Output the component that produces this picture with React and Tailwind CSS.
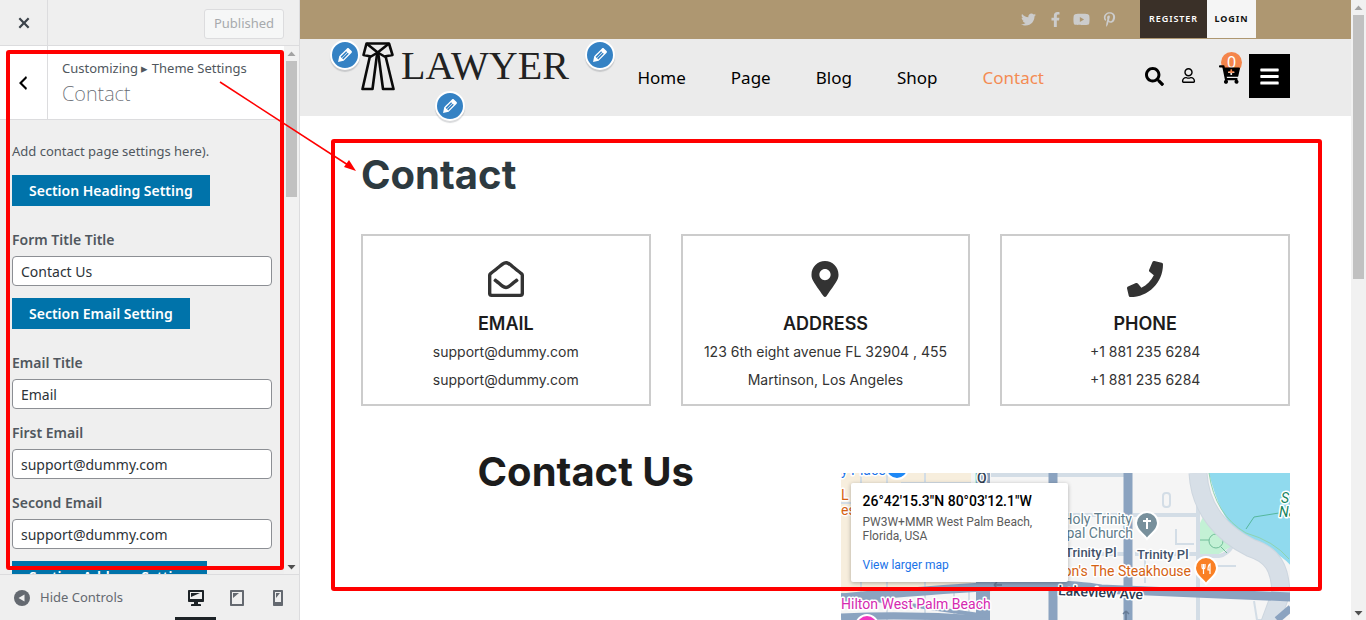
import React from "react";
import {
  FaTwitter,
  FaFacebookF,
  FaYoutube,
  FaPinterestP,
  FaSearch,
  FaRegUser,
  FaCartPlus,
  FaBars,
  FaMapMarkerAlt,
  FaPhone,
  FaRegEnvelopeOpen,
} from "react-icons/fa";

const icons = {
  pencil:
    "M13.89 3.39l2.71 2.72c.46.46.42 1.24.03 1.64l-8.01 8.02-5.56 1.16 1.16-5.58s7.6-7.63 7.99-8.03c.39-.39 1.22-.39 1.68.07zm-2.73 2.79l-5.59 5.61 1.11 1.11 5.54-5.65zm-2.97 8.23l5.58-5.6-1.07-1.08-5.59 5.6z",
  close:
    "M14.95 6.46L11.41 10l3.54 3.54-1.41 1.41L10 11.42l-3.53 3.53-1.42-1.42L8.58 10 5.05 6.47l1.42-1.42L10 8.58l3.54-3.53z",
  back: "M14 5l-5 5 5 5-1 2-7-7 7-7z",
  desktop:
    "M3 2h14c.55 0 1 .45 1 1v10c0 .55-.45 1-1 1h-5v2h2c.55 0 1 .45 1 1v1H5v-1c0-.55.45-1 1-1h2v-2H3c-.55 0-1-.45-1-1V3c0-.55.45-1 1-1zm13 9V4H4v7h12zM5 5h9L5 9V5z",
  tablet:
    "M4 2h12c.55 0 1 .45 1 1v14c0 .55-.45 1-1 1H4c-.55 0-1-.45-1-1V3c0-.55.45-1 1-1zm11 14V4H5v12h10zM6 5h6l-6 5V5z",
  phone:
    "M6 2h8c.55 0 1 .45 1 1v14c0 .55-.45 1-1 1H6c-.55 0-1-.45-1-1V3c0-.55.45-1 1-1zm7 12V4H7v10h6zM8 5h4l-4 5V5z",
};

function Glyph({ name, className = "size-5" }) {
  return (
    <svg viewBox="0 0 20 20" className={className} fill="currentColor" aria-hidden="true">
      <path fillRule="evenodd" d={icons[name]} />
    </svg>
  );
}

function Scrollbar({ thumb }) {
  return (
    <div className="flex w-[15px] shrink-0 flex-col items-center justify-between bg-[#f1f1f1]" aria-hidden="true">
      <div className="flex flex-col items-center">
        <svg className="h-[15px] w-[9px]" viewBox="0 0 9 15">
          <path d="M0.5 10L4.500 5.500L8.500 10Z" fill="#a3a3a3" />
        </svg>
        <div className={`w-[11px] bg-[#c1c1c1] ${thumb}`} />
      </div>
      <svg className="h-[15px] w-[9px]" viewBox="0 0 9 15">
        <path d="M0.5 6L4.500 10.500L8.500 6Z" fill="#505050" />
      </svg>
    </div>
  );
}

function SectionButton({ children }) {
  return (
    <button className="mt-3 block h-[31px] self-start bg-[#0073aa] px-[17px] text-[14px] leading-5 font-semibold text-white">
      {children}
    </button>
  );
}

function Field({ id, label, value, gap }) {
  return (
    <div className={gap}>
      <label htmlFor={id} className="block text-[14px] leading-5 font-semibold text-[#50575e]">
        {label}
      </label>
      <input
        id={id}
        defaultValue={value}
        className="mt-1.5 h-[30px] w-full rounded-[4px] border border-[#8c8f94] bg-white px-2 text-[14px] text-[#2c3338]"
      />
    </div>
  );
}

function Sidebar() {
  return (
    <aside className="relative flex w-[300px] shrink-0 flex-col border-r border-[#dcdcde] bg-[#efefef] font-['Noto_Sans',sans-serif]">
      <header className="flex h-[46px] shrink-0 items-center justify-between border-b border-[#dcdcde] pr-[15px]">
        <button aria-label="Close" className="flex h-full w-12 items-center justify-center border-r border-[#dcdcde] text-[#3c434a]">
          <Glyph name="close" className="size-[22px]" />
        </button>
        <button className="mt-0.5 h-[30px] w-20 rounded-[3px] border border-[#dcdcde] bg-[#f6f7f7] text-[13px] text-[#a7aaad]">
          Published
        </button>
      </header>

      <div className="flex min-h-0 flex-1">
        <div className="min-w-0 flex-1 overflow-hidden">
          <div className="flex h-[74px] border-b border-[#dcdcde] bg-white">
            <button aria-label="Back" className="flex w-12 shrink-0 items-center justify-center border-r border-[#dcdcde] pr-0.5 text-black">
              <Glyph name="back" />
            </button>
            <div className="pt-3 pl-3.5">
              <p className="text-[13px] leading-5 whitespace-nowrap text-[#50575e]">Customizing ▸ Theme Settings</p>
              <h2 className="mt-1 text-[20px] leading-6 font-extralight text-[#646970]">Contact</h2>
            </div>
          </div>
          <div className="flex flex-col px-3 pt-[21px]">
            <p className="mb-0.5 text-[13px] leading-5 text-[#50575e]">Add contact page settings here).</p>
            <SectionButton>Section Heading Setting</SectionButton>
            <Field id="form-title" label="Form Title Title" value="Contact Us" gap="mt-6" />
            <SectionButton>Section Email Setting</SectionButton>
            <Field id="email-title" label="Email Title" value="Email" gap="mt-6" />
            <Field id="first-email" label="First Email" value="support@dummy.com" gap="mt-3.5" />
            <Field id="second-email" label="Second Email" value="support@dummy.com" gap="mt-3.5" />
            <SectionButton>Section Address Setting</SectionButton>
          </div>
        </div>
        <Scrollbar thumb="h-[136px]" />
      </div>

      <footer className="flex h-[46px] shrink-0 items-center justify-between border-t border-[#dcdcde] pr-px text-[#646970]">
        <button className="flex items-center gap-2.5 pl-3.5 text-[13px]">
          <svg viewBox="0 0 16 16" className="size-4" aria-hidden="true">
            <circle cx="8" cy="8" r="8" fill="#646970" />
            <path d="M10.500 4.500v7L4.500 8z" fill="#efefef" />
          </svg>
          Hide Controls
        </button>
        <div className="flex h-full">
          <button aria-label="Desktop preview" className="flex w-[41px] items-center justify-center border-b-[3px] border-[#1d2327] pt-1 text-[#1d2327]">
            <Glyph name="desktop" />
          </button>
          <button aria-label="Tablet preview" className="flex w-[41px] items-center justify-center border-b-[3px] border-transparent pt-1">
            <Glyph name="tablet" />
          </button>
          <button aria-label="Mobile preview" className="flex w-[41px] items-center justify-center border-b-[3px] border-transparent pt-1">
            <Glyph name="phone" />
          </button>
        </div>
      </footer>

      <div className="pointer-events-none absolute top-[50px] right-[15px] bottom-[50px] left-1.5 rounded-[3px] border-4 border-[#f00]" />
    </aside>
  );
}

function EditPin({ place }) {
  return (
    <button
      aria-label="Edit"
      className={`absolute flex size-[30px] items-center justify-center rounded-full border-2 border-white bg-[#3582c4] text-white shadow-[0_2px_1px_rgba(60,67,74,0.2)] ${place}`}
    >
      <Glyph name="pencil" className="size-5 shrink-0" />
    </button>
  );
}

function Logo() {
  return (
    <a href="#home" className="flex items-center gap-1.5 text-[#222]">
      <svg viewBox="0 0 34 50" className="h-[50px] w-[34px]" fill="none" stroke="#0a0a0a" strokeWidth="2.600" strokeLinejoin="round" aria-hidden="true">
        <path d="M5.500 2.500H28L31.500 14L23.500 15.500L16.700 11.500L10 15.500L2.500 14Z" />
        <path d="M5.500 2.500L16.700 11.500L28 2.500" />
        <path d="M9 15L1.500 48H11.500L16.200 12" />
        <path d="M24.500 15L32.500 48H22L17.200 12" />
      </svg>
      <span className="font-['Liberation_Serif',serif] text-[40px] leading-[54px]">LAWYER</span>
    </a>
  );
}

const menu = ["Home", "Page", "Blog", "Shop", "Contact"];

function SiteHeader() {
  return (
    <header className="font-['Noto_Sans',sans-serif]">
      <div className="flex h-[39px] items-start justify-end bg-[#ae9771] pr-[95px]">
        <div className="flex h-[39px] items-center text-[#ccc]">
          <a href="#twitter" aria-label="Twitter" className="mr-3"><FaTwitter size={15} /></a>
          <a href="#facebook" aria-label="Facebook" className="mr-2.5"><FaFacebookF size={15} /></a>
          <a href="#youtube" aria-label="YouTube" className="mr-3"><FaYoutube size={17} /></a>
          <a href="#pinterest" aria-label="Pinterest" className="mr-[23px]"><FaPinterestP size={15} /></a>
        </div>
        <a href="#register" className="flex h-[38px] w-[67px] items-center justify-center bg-[#3a3028] text-[9px] font-semibold tracking-widest text-white">
          REGISTER
        </a>
        <a href="#login" className="flex h-[38px] w-[49px] items-center justify-center bg-[#f5f5f5] text-[9px] font-bold tracking-widest text-[#111]">
          LOGIN
        </a>
      </div>
      <div className="relative flex h-[77px] items-start bg-[#ebebeb] px-[61px]">
        <Logo />
        <nav className="ml-auto flex h-[77px] items-center gap-[45px] text-[17px] text-black">
          {menu.map((item) => (
            <a key={item} href={`#${item.toLowerCase()}`} className={item === "Contact" ? "text-[#f48b53]" : ""}>
              {item}
            </a>
          ))}
        </nav>
        <div className="ml-[101px] flex h-[74px] items-center text-black">
          <button aria-label="Search" className="mr-[17px]"><FaSearch size={19} /></button>
          <button aria-label="Account" className="mr-[23px] mb-0.5"><FaRegUser size={15} /></button>
          <button aria-label="Cart" className="relative mr-[9px]">
            <span className="absolute -top-3 left-0.5 flex size-[21px] items-center justify-center rounded-full bg-[#f4854b] text-[16px] leading-none text-white">
              0
            </span>
            <FaCartPlus size={21} className="relative mb-1" />
          </button>
          <button aria-label="Menu" className="flex h-11 w-[41px] items-center justify-center bg-black text-white">
            <FaBars size={21} />
          </button>
        </div>
        <EditPin place="top-px left-[30px]" />
        <EditPin place="top-px left-[285px]" />
        <EditPin place="top-[52px] left-[135px]" />
      </div>
    </header>
  );
}

const cards = [
  { title: "EMAIL", lines: ["support@dummy.com", "support@dummy.com"], Icon: FaRegEnvelopeOpen },
  { title: "ADDRESS", lines: ["123 6th eight avenue FL 32904 , 455", "Martinson, Los Angeles"], Icon: FaMapMarkerAlt },
  { title: "PHONE", lines: ["+1 881 235 6284", "+1 881 235 6284"], Icon: FaPhone },
];

function Card({ title, lines, Icon }) {
  return (
    <article className="flex flex-col items-center border-2 border-[#ccc] pt-[25px] pb-2.5 leading-7">
      <Icon size={36} color="#333" />
      <h3 className="mt-[13px] text-[18px] font-semibold text-[#1c1c1c]">{title}</h3>
      {lines.map((line, i) => (
        <p key={i} className="text-[14px] whitespace-nowrap text-[#333]">{line}</p>
      ))}
    </article>
  );
}

function MapDrawing() {
  return (
    <svg viewBox="0 0 450 300" className="block h-[300px] w-full" preserveAspectRatio="xMinYMin slice" fontFamily="Roboto, sans-serif">
      <rect width="450" height="300" fill="#f5f5f5" />
      <path d="M0 0H130V110L0 125Z" fill="#f7eedd" />
      <path d="M134 0H148V14H134Z" fill="#c3f1d5" />
      <g stroke="#d3dde6" strokeWidth="4" fill="none">
        <path d="M20 0V120M46 0V150M84 0V150M60 10H130M113 115V300M128 115V300M0 30H12" strokeWidth="2" />
        <path d="M150 2H285M292 42H357M294 81H356M180 42H285M180 81H285" strokeWidth="4" />
        <path d="M357 30V300" />
        <path d="M356 83H378Q386 82 392 72" />
        <path d="M335 56V71H353M366 93H395M304 84V110" strokeWidth="2" />
        <rect x="322" y="20" width="7" height="14" rx="3" strokeWidth="2" />
        <path d="M413 128L416 147M416 147H430" strokeWidth="2" />
      </g>
      <path d="M363 42L394 71L378 81H359V50Z" fill="#c3f1d5" />
      <g stroke="#70bd98" fill="none">
        <circle cx="375" cy="68" r="7" />
        <path d="M359 67H368M380 63L384 59M380 74L386 80" />
      </g>
      <path d="M368 0H450V93Q440 80 412 70Q382 58 368 0Z" fill="#90daee" />
      <path d="M405 56L413 44L438 40" stroke="#55b79c" fill="none" />
      <path d="M357 0C359 37 382 61 410 75C432 82 439 95 440 120L426 158" stroke="#cdd6df" strokeWidth="19" fill="none" />
      <path d="M357 0C359 37 382 61 410 75C432 82 439 95 440 120L426 158" stroke="#d7dfe7" strokeWidth="17" fill="none" />
      <path d="M368 0Q374 42 405 60Q433 68 448 86" stroke="#8ed3b0" fill="none" />
      <g stroke="#8ba3c0" fill="none">
        <path d="M142 0V300" strokeWidth="14" />
        <path d="M212 0V300" strokeWidth="9" />
        <path d="M287 0V300" strokeWidth="9" />
        <path d="M0 125Q60 119 142 114T260 116L450 124" strokeWidth="9" />
        <path d="M0 144Q70 141 142 146" strokeWidth="7" />
        <path d="M0 122L145 143" strokeWidth="4" />
        <path d="M436 147L450 135" strokeWidth="7" />
      </g>
      <g stroke="#667b95" fill="none" strokeWidth="1.500">
        <path d="M153 112H161M153 112L156 109M153 112L156 115M285 148V138M285 138L282 141M285 138L288 141" />
      </g>
      <g stroke="#fff" strokeWidth="3" paintOrder="stroke" strokeLinejoin="round" fontSize="14">
        <text x="0" y="2" fill="#1a73e8">y Place</text>
        <text x="0" y="27" fill="#d56213">L</text>
        <text x="0" y="42" fill="#d56213">es</text>
        <text x="136" y="10" fill="#334155" fontWeight="500">Q</text>
        <text x="291" y="51" fill="#607d8b" textAnchor="end">Holy Trinity</text>
        <text x="292" y="65" fill="#607d8b" textAnchor="end">Episcopal Church</text>
        <text x="224" y="84" fill="#42526b" fontSize="13" fontWeight="500">Trinity Pl</text>
        <text x="296" y="86" fill="#42526b" fontSize="13" fontWeight="500">Trinity Pl</text>
        <text x="350" y="103" fill="#d56213" textAnchor="end">Okeechobee Don's The Steakhouse</text>
        <text x="217" y="122" fill="#2b3b52" fontSize="14" fontWeight="500" transform="rotate(3 217 122)">Lakeview Ave</text>
        <text x="0" y="136" fill="#d52ab0">Hilton West Palm Beach</text>
        <text x="440" y="30" fill="#168461" fontStyle="italic">S</text>
        <text x="438" y="44" fill="#168461" fontStyle="italic">Na</text>
      </g>
      <g stroke="#fff" strokeWidth="2">
        <circle cx="56" cy="-5" r="11" fill="#1e88f5" />
        <circle cx="26" cy="153" r="11" fill="#f136c0" />
        <path d="M306 66C302 60 295 58 295 50A11 11 0 0 1 317 50C317 58 310 60 306 66Z" fill="#78909c" />
        <path d="M365 111C361 105 354 103 354 95A11 11 0 0 1 376 95C376 103 369 105 365 111Z" fill="#fa8024" />
        <path d="M306 45V56M302 48H310" />
        <path d="M361 91V94Q361 96 362.500 96T364 94V91M362.500 91V101M369 101V91Q367 92 367 97H369" fill="none" strokeWidth="1.200" />
      </g>
    </svg>
  );
}

function MapPanel() {
  return (
    <section aria-label="Map" className="relative mt-[26px] overflow-hidden font-['Roboto',sans-serif]">
      <MapDrawing />
      <div className="absolute top-2.5 left-2.5 h-[99px] w-[217px] rounded-[2px] bg-white px-3 pt-[9px] shadow-[0_1px_4px_rgba(0,0,0,0.3)]">
        <p className="text-[14px] leading-[18px] font-medium whitespace-nowrap text-black">26°42'15.3"N 80°03'12.1"W</p>
        <p className="mt-[5px] text-[12px] leading-[14px] text-[#5b5b5b]">
          PW3W+MMR West Palm Beach,
          <br />
          Florida, USA
        </p>
        <a href="#map" className="mt-3.5 block text-[12px] leading-4 text-[#1a73e8]">View larger map</a>
      </div>
    </section>
  );
}

function Preview() {
  return (
    <main className="relative flex min-w-0 flex-1 bg-white">
      <div className="min-w-0 flex-1 overflow-hidden">
        <SiteHeader />
        <div className="px-[61px] pt-[34px] font-['Inter',sans-serif]">
          <h1 className="text-[40px] leading-[50px] font-bold text-[#2d3a40]">Contact</h1>
          <div className="mt-[34px] grid grid-cols-3 gap-[30px]">
            {cards.map((card) => (
              <Card key={card.title} {...card} />
            ))}
          </div>
          <div className="mt-[41px] grid grid-cols-2 gap-[30px]">
            <h2 className="text-center text-[40px] leading-[50px] font-bold text-[#1c1c1c]">Contact Us</h2>
            <MapPanel />
          </div>
        </div>
      </div>
      <Scrollbar thumb="h-[264px]" />
      <div className="pointer-events-none absolute top-[139px] right-11 bottom-[29px] left-[31px] rounded-[3px] border-4 border-[#f00]" />
    </main>
  );
}

export default function App() {
  return (
    <div className="relative flex h-screen overflow-hidden">
      <Sidebar />
      <Preview />
      <svg className="pointer-events-none absolute top-20 left-[218px] h-24 w-[142px]" viewBox="0 0 142 96" aria-hidden="true">
        <path d="M2 2L130 85" stroke="#f00" strokeWidth="1.500" />
        <path d="M138 91L126 87L131 80Z" fill="#f00" />
      </svg>
    </div>
  );
}
